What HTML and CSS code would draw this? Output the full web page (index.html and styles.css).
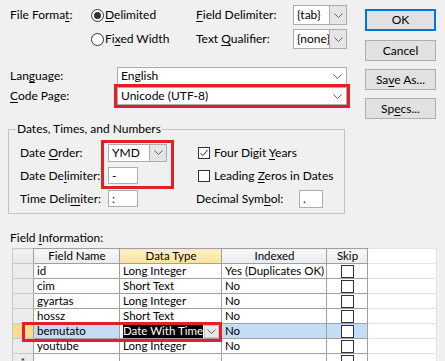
FILE: index.html
```html
<!DOCTYPE html>
<html lang="en">
<head>
  <meta charset="UTF-8">
  <title>Import Specification</title>
  <link rel="stylesheet" href="styles.css">
</head>
<body>
  <div class="dialog">
    <div class="top">
      <div class="form">
        <div class="row row-format">
          <span class="w-format">File Forma<u>t</u>:</span>
          <span class="radio w-radio"><span class="dot checked"></span><span><u>D</u>elimited</span></span>
          <span class="w-delim"><u>F</u>ield Delimiter:</span>
          <div class="combo combo-small">
            <span class="combo-text">{tab}</span>
            <span class="combo-btn grey"><svg width="9" height="5" viewBox="0 0 9 5"><polyline points="0.5,0.5 4.5,4.5 8.5,0.5" /></svg></span>
          </div>
        </div>
        <div class="row row-qualifier">
          <span class="w-format"></span>
          <span class="radio w-radio"><span class="dot"></span><span>Fi<u>x</u>ed Width</span></span>
          <span class="w-delim">Text <u>Q</u>ualifier:</span>
          <div class="combo combo-small">
            <span class="combo-text">{none}</span>
            <span class="combo-btn grey"><svg width="9" height="5" viewBox="0 0 9 5"><polyline points="0.5,0.5 4.5,4.5 8.5,0.5" /></svg></span>
          </div>
        </div>
        <div class="row row-language">
          <span class="w-lang">Lan<u>g</u>uage:</span>
          <div class="combo combo-wide">
            <span class="combo-text">English</span>
            <span class="combo-btn"><svg width="9" height="5" viewBox="0 0 9 5"><polyline points="0.5,0.5 4.5,4.5 8.5,0.5" /></svg></span>
          </div>
        </div>
        <div class="row row-codepage">
          <span class="w-lang"><u>C</u>ode Page:</span>
          <div class="combo combo-wide marked">
            <span class="combo-text">Unicode (UTF-8)</span>
            <span class="combo-btn"><svg width="9" height="5" viewBox="0 0 9 5"><polyline points="0.5,0.5 4.5,4.5 8.5,0.5" /></svg></span>
          </div>
        </div>
      </div>
      <div class="buttons">
        <button class="btn btn-default">OK</button>
        <button class="btn">Cancel</button>
        <button class="btn">Sa<u>v</u>e As...</button>
        <button class="btn">Sp<u>e</u>cs...</button>
      </div>
    </div>

    <fieldset class="group">
      <legend>Dates, Times, and Numbers</legend>
      <div class="group-grid">
        <span>Date <u>O</u>rder:</span>
        <div class="combo combo-order">
          <span class="combo-text">YMD</span>
          <span class="combo-btn grey"><svg width="9" height="5" viewBox="0 0 9 5"><polyline points="0.5,0.5 4.5,4.5 8.5,0.5" /></svg></span>
        </div>
        <span class="check"><span class="box"><svg width="10" height="10" viewBox="0 0 10 10"><polyline points="1.5,5 4,7.5 8.5,2" /></svg></span><span>Four Digit <u>Y</u>ears</span></span>

        <span>Date De<u>l</u>imiter:</span>
        <div class="input input-delim">-</div>
        <span class="check"><span class="box"></span><span>Leading <u>Z</u>eros in Dates</span></span>

        <span>Time Deli<u>m</u>iter:</span>
        <div class="input input-delim">:</div>
        <span>Decimal Sym<u>b</u>ol:</span>
        <div class="input input-dec">.</div>
      </div>
      <div class="mark mark-date"></div>
    </fieldset>

    <div class="field-info">Field <u>I</u>nformation:</div>

    <div class="grid-wrap">
      <table class="grid">
        <colgroup>
          <col class="c-sel"><col class="c-name"><col class="c-type"><col class="c-index"><col class="c-skip"><col class="c-fill">
        </colgroup>
        <thead>
          <tr>
            <th class="sel corner"></th>
            <th>Field Name</th>
            <th class="active">Data Type</th>
            <th>Indexed</th>
            <th>Skip</th>
            <th class="fill"></th>
          </tr>
        </thead>
        <tbody>
          <tr>
            <td class="sel"></td><td>id</td><td>Long Integer</td><td>Yes (Duplicates OK)</td>
            <td class="skip"><span class="skip-box"></span></td><td class="fill"></td>
          </tr>
          <tr>
            <td class="sel"></td><td>cim</td><td>Short Text</td><td>No</td>
            <td class="skip"><span class="skip-box"></span></td><td class="fill"></td>
          </tr>
          <tr>
            <td class="sel"></td><td>gyartas</td><td>Long Integer</td><td>No</td>
            <td class="skip"><span class="skip-box"></span></td><td class="fill"></td>
          </tr>
          <tr>
            <td class="sel"></td><td>hossz</td><td>Short Text</td><td>No</td>
            <td class="skip"><span class="skip-box"></span></td><td class="fill"></td>
          </tr>
          <tr class="selected">
            <td class="sel current"></td><td>bemutato</td>
            <td class="editing"><div class="cell-combo"><span class="hilite">Date With Time</span><span class="cell-btn"><svg width="9" height="5" viewBox="0 0 9 5"><polyline points="0.5,0.5 4.5,4.5 8.5,0.5" /></svg></span></div></td>
            <td>No</td>
            <td class="skip"><span class="skip-box"></span></td><td class="fill"></td>
          </tr>
          <tr>
            <td class="sel"></td><td>youtube</td><td>Long Integer</td><td>No</td>
            <td class="skip"><span class="skip-box"></span></td><td class="fill"></td>
          </tr>
          <tr>
            <td class="sel new">*</td><td></td><td></td><td></td>
            <td class="skip"><span class="skip-box"></span></td><td class="fill"></td>
          </tr>
        </tbody>
      </table>
      <div class="mark mark-row"></div>
    </div>
  </div>
</body>
</html>
```

FILE: styles.css
```css
:root {
  --face: #f0f0f0;
  --edge: #abadb3;
  --line: #a0a0a0;
  --mark: #e0202a;
  --select: #c5dcf5;
}

* {
  margin: 0;
  padding: 0;
  box-sizing: border-box;
}

body {
  width: 445px;
  height: 361px;
  overflow: hidden;
  background-color: var(--face);
  color: #000;
  font: 12px/14px Lato, "Liberation Sans", sans-serif;
}

u {
  text-underline-offset: 2px;
}

.dialog {
  padding: 0 9px 0 10px;
}

/* Top part: format options and buttons */
.top {
  display: flex;
}

.form {
  width: 337px;
}

.row {
  display: flex;
  align-items: center;
}

.row-format {
  margin-top: 5px;
  height: 20px;
}

.row-qualifier {
  margin-top: 4px;
  height: 20px;
}

.row-language {
  margin-top: 18px;
  height: 18px;
}

.row-codepage {
  margin-top: 2px;
  height: 18px;
}

.w-format {
  width: 81px;
}

.w-radio {
  width: 105px;
}

.w-delim {
  width: 97px;
}

.w-lang {
  width: 107px;
}

.radio {
  display: flex;
  align-items: center;
}

.dot {
  width: 13px;
  height: 13px;
  margin-right: 1px;
  border: 1px solid #333;
  border-radius: 50%;
  background-color: #fff;
  display: flex;
  align-items: center;
  justify-content: center;
}

.dot.checked::after {
  content: "";
  width: 7px;
  height: 7px;
  border-radius: 50%;
  background-color: #333;
}

/* Combo boxes */
.combo {
  display: flex;
  height: 100%;
  background-color: #fff;
  border: 1px solid var(--edge);
}

.combo-text {
  flex: 1;
  padding: 0 3px;
  white-space: nowrap;
  overflow: hidden;
  display: flex;
  align-items: center;
}

.combo-btn {
  width: 17px;
  display: flex;
  align-items: center;
  justify-content: center;
}

.combo-btn.grey {
  background-color: #e5e5e5;
  border-left: 1px solid var(--edge);
}

.combo svg polyline,
.cell-btn svg polyline {
  fill: none;
  stroke: #606060;
  stroke-width: 1;
}

.combo-small {
  width: 54px;
}

.combo-wide {
  width: 230px;
}

.marked {
  outline: 3px solid var(--mark);
  outline-offset: 0;
}

/* Buttons */
.buttons {
  margin-left: 18px;
  padding-top: 9px;
  display: flex;
  flex-direction: column;
  gap: 8px;
}

.btn {
  width: 71px;
  height: 21px;
  background-color: #e1e1e1;
  border: 1px solid #adadad;
  font: inherit;
  color: #000;
}

.btn-default {
  height: 22px;
  margin-bottom: 1px;
  border: 2px solid #0078d7;
}

/* Dates, Times, and Numbers group */
.group {
  position: relative;
  width: 337px;
  margin: 3px 0 0 -2px;
  padding: 8px 0 6px 11px;
  border: 1px solid #c3c3c3;
}

.group legend {
  margin-left: -4px;
  padding: 0 1px;
}

.group-grid {
  display: grid;
  grid-template-columns: 88px 88px 103px 24px;
  grid-auto-rows: 17px;
  row-gap: 6px;
  align-items: center;
}

.combo-order {
  width: 59px;
  height: 18px;
}

.input {
  height: 17px;
  background-color: #fff;
  border: 1px solid var(--edge);
  padding: 0 3px;
  line-height: 15px;
}

.input-delim {
  width: 30px;
}

.input-dec {
  width: 24px;
  height: 18px;
}

.check {
  grid-column: 3 / 5;
  display: flex;
  align-items: center;
  padding-left: 2px;
  white-space: nowrap;
}

.box {
  flex: none;
  width: 12px;
  height: 12px;
  margin-right: 4px;
  border: 1px solid #333;
  background-color: #fff;
  display: flex;
  align-items: center;
  justify-content: center;
}

.box svg polyline {
  fill: none;
  stroke: #333;
  stroke-width: 1;
}

/* Red annotation frames */
.mark {
  position: absolute;
  border: 3px solid var(--mark);
  pointer-events: none;
}

.mark-date {
  left: 92px;
  top: 4px;
  width: 73px;
  height: 49px;
}

/* Field information grid */
.field-info {
  margin-top: 17px;
}

.grid-wrap {
  position: relative;
  margin: 3px 0 0 2px;
  width: 424px;
}

.grid {
  width: 424px;
  table-layout: fixed;
  border-collapse: collapse;
  background-color: #fff;
  border-top: 1px solid #8c8c8c;
  border-left: 1px solid #c8c8c8;
  font-size: 11.5px;
}

.c-sel { width: 21px; }
.c-name { width: 86px; }
.c-type { width: 102px; }
.c-index { width: 105px; }
.c-skip { width: 41px; }
.c-fill { width: 69px; }

.grid th,
.grid td {
  height: 15px;
  padding: 0 2px 0 3px;
  border: 1px solid var(--line);
  white-space: nowrap;
  overflow: hidden;
  font-weight: normal;
  line-height: 14px;
  text-align: left;
}

.grid th {
  text-align: center;
  background: linear-gradient(#f7f8fa, #e9ecf0);
}

.grid th.active {
  background: linear-gradient(#fff1c4, #fbe39c);
}

.grid .sel {
  background: #ececec;
  border-color: #c8c8c8;
  border-right-color: var(--line);
  padding: 0;
  font-size: 10px;
  text-align: center;
}

.grid th.sel {
  background: linear-gradient(#f4f4f4, #e6e6e6);
}

.grid .sel.current {
  background: #f9dc8e;
}

.grid .fill {
  background: #fff;
  border-color: #e3e3e3;
  border-left-color: var(--line);
}

.grid .skip {
  padding: 0;
  text-align: center;
}

.skip-box {
  display: inline-block;
  width: 13px;
  height: 13px;
  margin-top: 1px;
  border: 1px solid #333;
  background: #fff;
  vertical-align: top;
}

.selected td {
  background: var(--select);
}

.selected td.editing {
  background: #fff;
  padding: 0 2px 0 3px;
}

.cell-combo {
  display: flex;
  align-items: center;
  justify-content: space-between;
}

.hilite {
  background: #000;
  color: #fff;
}

.cell-btn {
  width: 15px;
  height: 13px;
  background: #e8e8e8;
  border: 1px solid #c8c8c8;
  display: flex;
  align-items: center;
  justify-content: center;
}

.mark-row {
  left: 10px;
  top: 74px;
  width: 200px;
  height: 20px;
}
```
